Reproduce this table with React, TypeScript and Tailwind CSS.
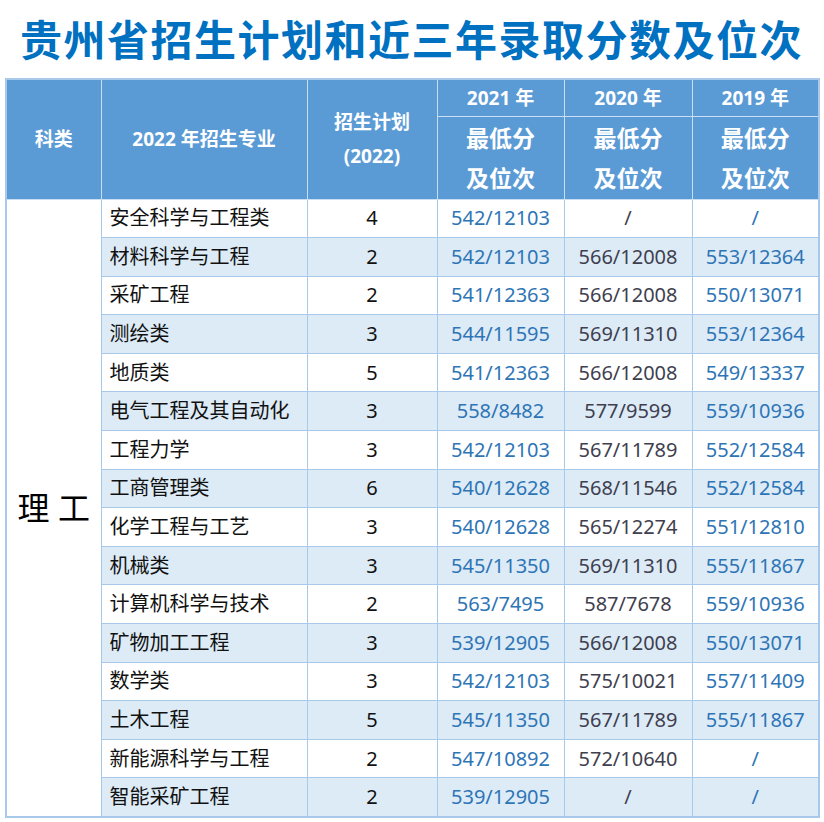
import React from 'react'

type Row = {
  major: string
  plan: number
  y2021: string
  y2020: string
  y2019: string
}

const rows: Row[] = [
  { major: '安全科学与工程类', plan: 4, y2021: '542/12103', y2020: '/', y2019: '/' },
  { major: '材料科学与工程', plan: 2, y2021: '542/12103', y2020: '566/12008', y2019: '553/12364' },
  { major: '采矿工程', plan: 2, y2021: '541/12363', y2020: '566/12008', y2019: '550/13071' },
  { major: '测绘类', plan: 3, y2021: '544/11595', y2020: '569/11310', y2019: '553/12364' },
  { major: '地质类', plan: 5, y2021: '541/12363', y2020: '566/12008', y2019: '549/13337' },
  { major: '电气工程及其自动化', plan: 3, y2021: '558/8482', y2020: '577/9599', y2019: '559/10936' },
  { major: '工程力学', plan: 3, y2021: '542/12103', y2020: '567/11789', y2019: '552/12584' },
  { major: '工商管理类', plan: 6, y2021: '540/12628', y2020: '568/11546', y2019: '552/12584' },
  { major: '化学工程与工艺', plan: 3, y2021: '540/12628', y2020: '565/12274', y2019: '551/12810' },
  { major: '机械类', plan: 3, y2021: '545/11350', y2020: '569/11310', y2019: '555/11867' },
  { major: '计算机科学与技术', plan: 2, y2021: '563/7495', y2020: '587/7678', y2019: '559/10936' },
  { major: '矿物加工工程', plan: 3, y2021: '539/12905', y2020: '566/12008', y2019: '550/13071' },
  { major: '数学类', plan: 3, y2021: '542/12103', y2020: '575/10021', y2019: '557/11409' },
  { major: '土木工程', plan: 5, y2021: '545/11350', y2020: '567/11789', y2019: '555/11867' },
  { major: '新能源科学与工程', plan: 2, y2021: '547/10892', y2020: '572/10640', y2019: '/' },
  { major: '智能采矿工程', plan: 2, y2021: '539/12905', y2020: '/', y2019: '/' },
]

const font = { fontFamily: '"Noto Sans", "Noto Sans CJK SC", sans-serif' }

// Header cell borders are a pale blue line over the mid-blue fill.
const th = 'border border-[#c9def2] bg-[#5b9bd5] p-0 text-center font-bold text-white'
const td = 'border border-[#a9c9ea] p-0 h-[38.6px] text-[20px] leading-none'

export default function App() {
  return (
    <div className="h-[822px] w-[824px] bg-white" style={font}>
      <h1 className="pt-[16px] pl-[20px] text-[42px] font-bold leading-[48px] tracking-[1.5px] text-[#0070c0]">
        贵州省招生计划和近三年录取分数及位次
      </h1>
      <table className="mt-[14px] ml-[5px] w-[813px] table-fixed border-collapse border-2 border-[#a9c9ea]">
        <colgroup>
          <col className="w-[95px]" />
          <col className="w-[206px]" />
          <col className="w-[130px]" />
          <col className="w-[127px]" />
          <col className="w-[128px]" />
          <col className="w-[127px]" />
        </colgroup>
        <thead>
          <tr className="h-[37px]">
            <th rowSpan={2} className={`${th} text-[19px]`}>科类</th>
            <th rowSpan={2} className={`${th} text-[19px]`}>2022 年招生专业</th>
            <th rowSpan={2} className={`${th} text-[19px] leading-[34px]`}>
              招生计划
              <br />
              (2022)
            </th>
            <th className={`${th} text-[19px]`}>2021 年</th>
            <th className={`${th} text-[19px]`}>2020 年</th>
            <th className={`${th} text-[19px]`}>2019 年</th>
          </tr>
          <tr className="h-[83px]">
            {[0, 1, 2].map((i) => (
              <th key={i} className={`${th} text-[23px] leading-[40px]`}>
                最低分
                <br />
                及位次
              </th>
            ))}
          </tr>
        </thead>
        <tbody>
          {rows.map((r, i) => (
            <tr key={r.major} className={i % 2 === 1 ? 'bg-[#ddebf7]' : 'bg-white'}>
              {i === 0 && (
                <td rowSpan={rows.length} className="border border-[#a9c9ea] bg-white text-center text-[32px] text-black">
                  理 工
                </td>
              )}
              <td className={`${td} pl-[8px] text-left text-[#111]`}>{r.major}</td>
              <td className={`${td} text-center text-[#111]`}>{r.plan}</td>
              <td className={`${td} text-center text-[#2e75b6]`}>{r.y2021}</td>
              <td className={`${td} text-center text-[#3f3f4f]`}>{r.y2020}</td>
              <td className={`${td} text-center text-[#2e75b6]`}>{r.y2019}</td>
            </tr>
          ))}
        </tbody>
      </table>
    </div>
  )
}
